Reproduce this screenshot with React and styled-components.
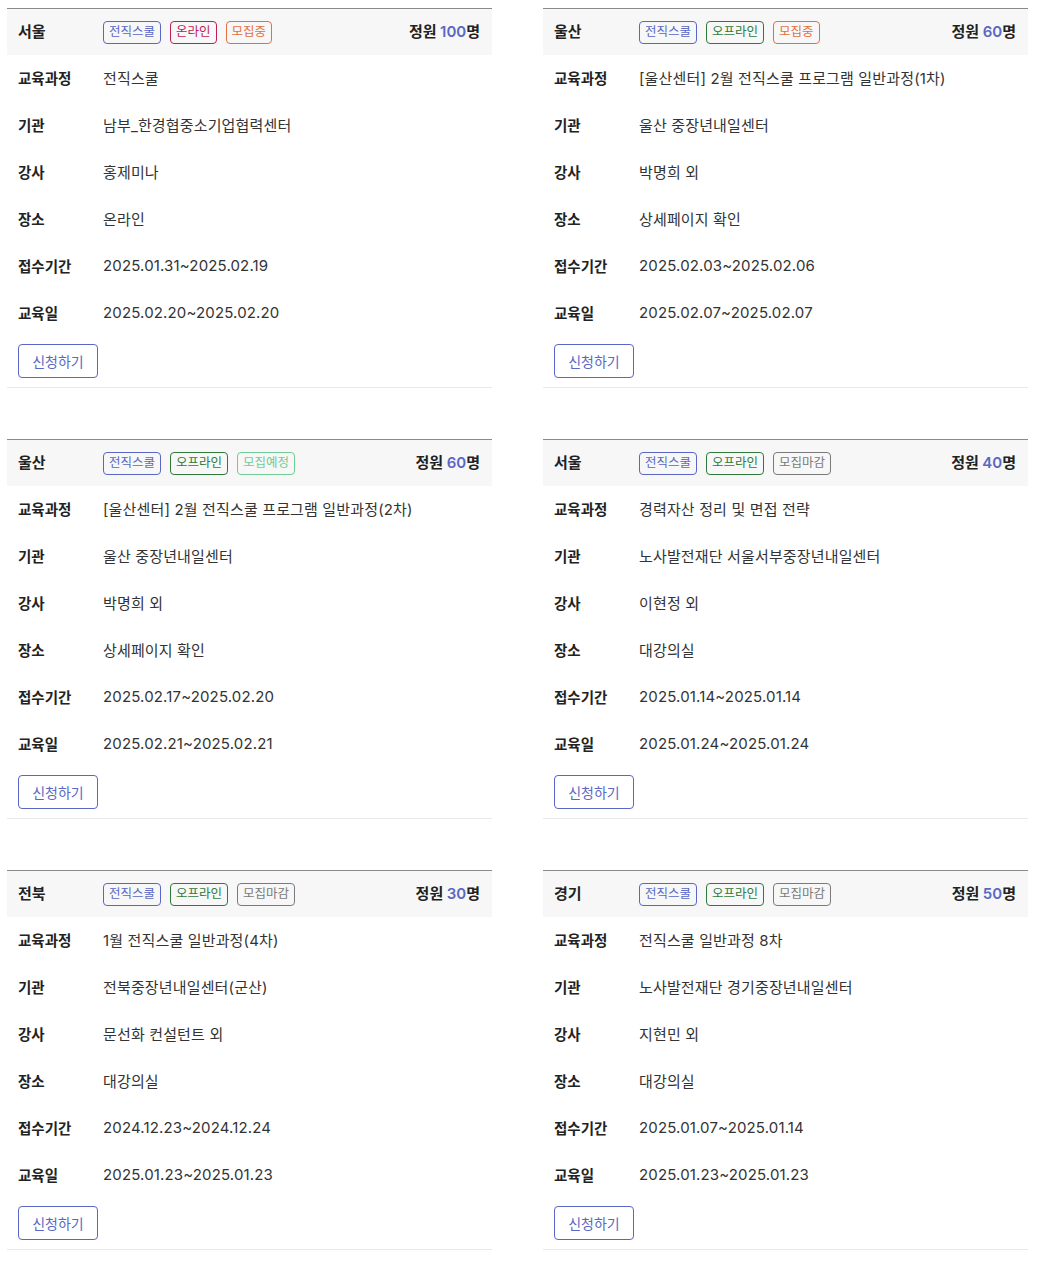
import React from 'react';
import styled, { createGlobalStyle } from 'styled-components';

const GlobalStyle = createGlobalStyle`
  body {
    margin: 0;
    background: #fff;
    font-family: Inter, "Noto Sans CJK KR", sans-serif;
    color: #333;
  }
`;

const Grid = styled.div`
  display: grid;
  grid-template-columns: 485px 485px;
  column-gap: 51px;
  row-gap: 51px;
  padding: 8px 0 24px 7px;
`;

const Card = styled.div`
  border-top: 1px solid #8a8a8a;
  border-bottom: 1px solid #e9e9e9;
  padding-bottom: 9px;
`;

const Header = styled.div`
  display: flex;
  align-items: center;
  box-sizing: border-box;
  height: 46px;
  background: #f7f7f7;
  padding: 0 12px 0 11px;
`;

const Region = styled.div`
  width: 85px;
  margin-bottom: 3px;
  font-size: 15px;
  font-weight: 700;
  color: #222;
`;

const Badges = styled.div`
  display: flex;
  gap: 9px;
  flex: 1;
`;

const colors = {
  blue: '#5a67c4',
  crimson: '#c21b5a',
  orange: '#e2703f',
  green: '#2f7a3a',
  mint: '#6fcc94',
  gray: '#7a7a7a',
};

const Badge = styled.span`
  display: inline-flex;
  align-items: center;
  box-sizing: border-box;
  height: 23px;
  padding: 0 5px;
  border: 1px solid ${(p) => colors[p.$tone]};
  border-radius: 4px;
  color: ${(p) => colors[p.$tone]};
  font-size: 12.5px;
  line-height: 1;
`;

const Quota = styled.div`
  margin-bottom: 3px;
  font-size: 15px;
  font-weight: 700;
  color: #222;

  b {
    color: #5a67c4;
    font-weight: 600;
  }
`;

const Row = styled.div`
  display: flex;
  align-items: center;
  height: 47px;
  padding: 0 0 2px 11px;
  box-sizing: border-box;
`;

const Label = styled.div`
  width: 85px;
  font-size: 14.5px;
  font-weight: 700;
  color: #222;
`;

const Value = styled.div`
  font-size: 15px;
  color: #333;
  letter-spacing: 0.15px;
`;

const ApplyButton = styled.button`
  margin: 7px 0 0 11px;
  width: 80px;
  height: 34px;
  background: #fff;
  border: 1px solid #5a67c4;
  border-radius: 4px;
  color: #5a67c4;
  font-family: inherit;
  font-size: 14px;
  cursor: pointer;
`;

const courses = [
  {
    region: '서울', mode: ['온라인', 'crimson'], status: ['모집중', 'orange'], quota: 100,
    course: '전직스쿨', org: '남부_한경협중소기업협력센터', teacher: '홍제미나', place: '온라인',
    apply: '2025.01.31~2025.02.19', date: '2025.02.20~2025.02.20',
  },
  {
    region: '울산', mode: ['오프라인', 'green'], status: ['모집중', 'orange'], quota: 60,
    course: '[울산센터] 2월 전직스쿨 프로그램 일반과정(1차)', org: '울산 중장년내일센터', teacher: '박명희 외', place: '상세페이지 확인',
    apply: '2025.02.03~2025.02.06', date: '2025.02.07~2025.02.07',
  },
  {
    region: '울산', mode: ['오프라인', 'green'], status: ['모집예정', 'mint'], quota: 60,
    course: '[울산센터] 2월 전직스쿨 프로그램 일반과정(2차)', org: '울산 중장년내일센터', teacher: '박명희 외', place: '상세페이지 확인',
    apply: '2025.02.17~2025.02.20', date: '2025.02.21~2025.02.21',
  },
  {
    region: '서울', mode: ['오프라인', 'green'], status: ['모집마감', 'gray'], quota: 40,
    course: '경력자산 정리 및 면접 전략', org: '노사발전재단 서울서부중장년내일센터', teacher: '이현정 외', place: '대강의실',
    apply: '2025.01.14~2025.01.14', date: '2025.01.24~2025.01.24',
  },
  {
    region: '전북', mode: ['오프라인', 'green'], status: ['모집마감', 'gray'], quota: 30,
    course: '1월 전직스쿨 일반과정(4차)', org: '전북중장년내일센터(군산)', teacher: '문선화 컨설턴트 외', place: '대강의실',
    apply: '2024.12.23~2024.12.24', date: '2025.01.23~2025.01.23',
  },
  {
    region: '경기', mode: ['오프라인', 'green'], status: ['모집마감', 'gray'], quota: 50,
    course: '전직스쿨 일반과정 8차', org: '노사발전재단 경기중장년내일센터', teacher: '지현민 외', place: '대강의실',
    apply: '2025.01.07~2025.01.14', date: '2025.01.23~2025.01.23',
  },
];

const CourseCard = ({ c }) => (
  <Card>
    <Header>
      <Region>{c.region}</Region>
      <Badges>
        <Badge $tone="blue">전직스쿨</Badge>
        <Badge $tone={c.mode[1]}>{c.mode[0]}</Badge>
        <Badge $tone={c.status[1]}>{c.status[0]}</Badge>
      </Badges>
      <Quota>
        정원 <b>{c.quota}</b>명
      </Quota>
    </Header>
    <Row><Label>교육과정</Label><Value>{c.course}</Value></Row>
    <Row><Label>기관</Label><Value>{c.org}</Value></Row>
    <Row><Label>강사</Label><Value>{c.teacher}</Value></Row>
    <Row><Label>장소</Label><Value>{c.place}</Value></Row>
    <Row><Label>접수기간</Label><Value>{c.apply}</Value></Row>
    <Row><Label>교육일</Label><Value>{c.date}</Value></Row>
    <ApplyButton>신청하기</ApplyButton>
  </Card>
);

const App = () => (
  <>
    <GlobalStyle />
    <Grid>
      {courses.map((c, i) => (
        <CourseCard key={i} c={c} />
      ))}
    </Grid>
  </>
);

export default App;
